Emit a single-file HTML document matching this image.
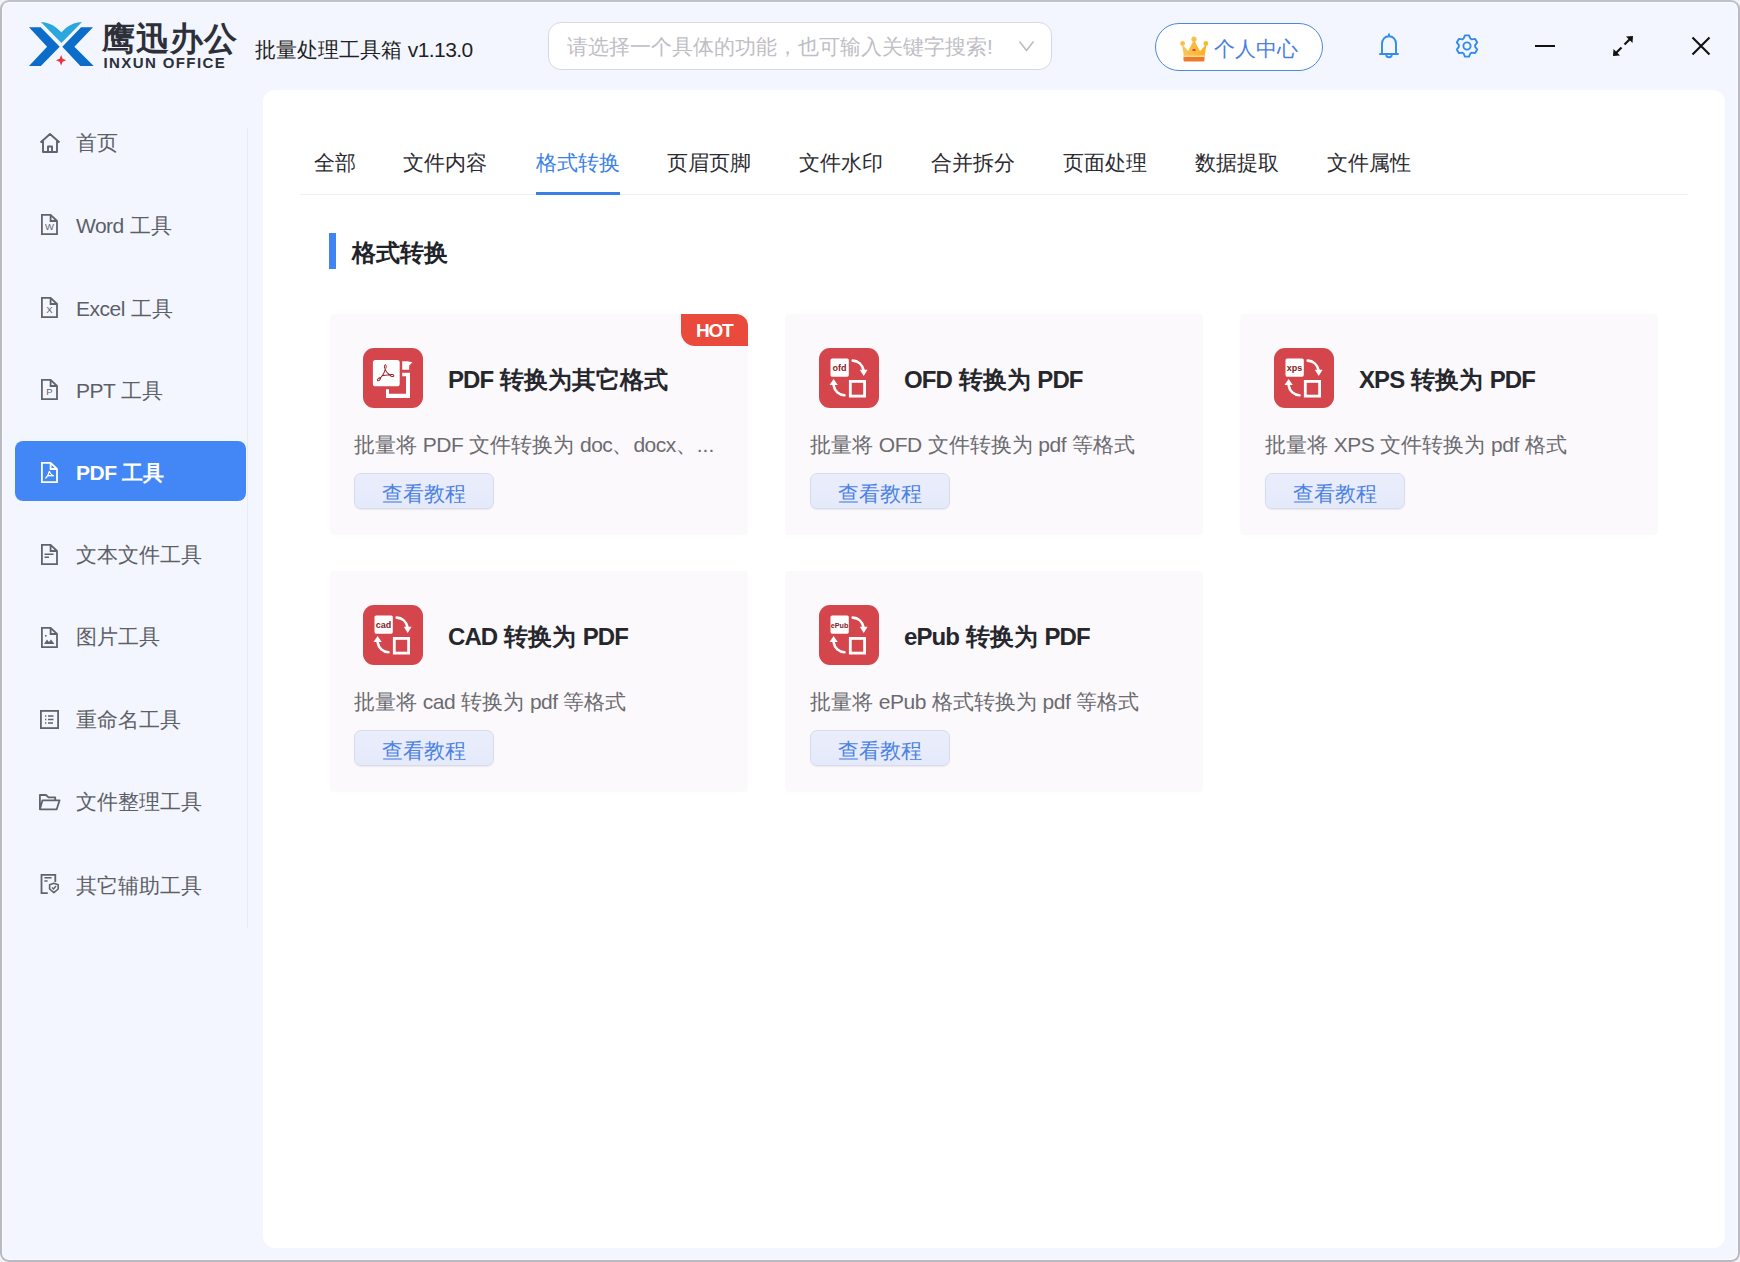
<!DOCTYPE html>
<html><head><meta charset="utf-8"><style>
*{margin:0;padding:0;box-sizing:border-box}
html,body{width:1740px;height:1262px;overflow:hidden;background:#f2f1f4}
body{font-family:"Liberation Sans",sans-serif;position:relative}
.a{position:absolute;white-space:nowrap;line-height:1}
.win{position:absolute;left:0;top:0;width:1740px;height:1262px;background:#f3f6fe;border:2px solid #b9b9c3;border-top-color:#bec1cb;border-radius:9px;box-shadow:inset 0 0 0 1px #fbfbff}
.logo-t{left:102px;top:22px;font-size:33px;font-weight:bold;color:#2d3039;letter-spacing:1px}
.logo-s{left:103.5px;top:54.5px;font-size:15px;font-weight:bold;color:#2d3039;letter-spacing:1.4px}
.title{left:255px;top:39px;font-size:21px;color:#1f1f24}
.search{left:548px;top:22px;width:504px;height:48px;background:#fff;border:1px solid #d9d8e2;border-radius:13px}
.stext{left:567px;top:36px;font-size:21px;color:#bfbec5}
.vip{left:1155px;top:23px;width:168px;height:48px;border:1.4px solid #4d87e0;border-radius:24px;background:#fff}
.viptext{left:1214px;top:37.5px;font-size:21px;color:#4a80df}
.sline{left:247px;top:128px;width:1px;height:800px;background:#e8eaf8}
.act{left:15px;top:441px;width:231px;height:60px;border-radius:8px;background:#4386f5}
.st{left:76px;font-size:21px;color:#5d5f67}
.st.on{color:#fff;font-weight:bold}
.main{left:263px;top:90px;width:1462px;height:1158px;background:#fff;border-radius:12px}
.divider{left:300px;top:194px;width:1388px;height:1px;background:#eeeef3}
.tab{top:151.5px;font-size:21px;color:#2b2b31}
.tab.on{color:#3c7fe7}
.uline{left:536px;top:192px;width:84px;height:3px;background:#3a7ee9}
.secbar{left:329px;top:233px;width:7px;height:36px;background:#3f83f4}
.sect{left:352px;top:241px;font-size:24px;font-weight:bold;color:#222329}
.card{position:absolute;width:418px;height:221px;background:#fbf9fc;border-radius:4px}
.ct{font-size:24px;font-weight:bold;color:#26272d}
.cd{font-size:21px;color:#6b6b70}
.btn{position:absolute;width:140px;height:36px;border-radius:7px;background:linear-gradient(#eaedfb,#e5eafb);border:1px solid #d8dbec;box-shadow:0 1px 1px rgba(90,90,120,0.10)}
.bt{font-size:21px;color:#4b82e3}
.hot{position:absolute;left:681px;top:314px;width:67px;height:32px;background:#ea4a3b;border-radius:0 12px 0 14px}
.hott{left:696px;top:321px;font-size:19px;font-weight:bold;color:#fff;letter-spacing:-1.2px}
</style></head><body>
<div class="win"></div>
<svg class="a" style="left:25px;top:15px" width="75" height="60" viewBox="0 0 75 60">
<path d="M4,12.3 H15.7 L34.7,31.8 L15.9,51.1 H4 L22.1,31.8 Z" fill="#0b6cc9"/>
<path d="M68,12.3 H56.1 L37.3,31.8 L55.4,51.1 H68.7 L49.4,31.8 Z" fill="#0b6cc9"/>
<path d="M15.9,7.1 C22,7.5 27,9.5 31,12.5 L36.4,17.3 L41.8,12.3 C46,9 51,7 57,6.9 L36.4,28 Z" fill="#2ca7de"/>
<path d="M36.1,40 L37.6,43.7 L41.2,45.2 L37.6,46.7 L36.1,50.4 L34.6,46.7 L31,45.2 L34.6,43.7 Z" fill="#ee3340"/>
</svg>
<div class="a logo-t">鹰迅办公</div>
<div class="a logo-s">INXUN OFFICE</div>
<div class="a title">批量处理工具箱 <span style="letter-spacing:-0.6px">v1.13.0</span></div>
<div class="a search"></div>
<div class="a stext">请选择一个具体的功能，也可输入关键字搜索!</div>
<svg class="a" style="left:1018px;top:40px" width="17" height="12" viewBox="0 0 17 12"><path d="M1.5,1.5 L8.5,10.5 L15.5,1.5" fill="none" stroke="#bdbcc3" stroke-width="1.6"/></svg>
<div class="a vip"></div>
<svg class="a" style="left:1180px;top:36px" width="29" height="27" viewBox="0 0 29 27">
<defs><linearGradient id="cg" x1="0" x2="1"><stop offset="0" stop-color="#f7c65a"/><stop offset="1" stop-color="#fbb21f"/></linearGradient></defs>
<circle cx="14" cy="3.2" r="2.6" fill="#f7c04c"/><circle cx="2.6" cy="7.5" r="2.4" fill="#f7c04c"/><circle cx="25.8" cy="7.5" r="2.4" fill="#f9b92f"/>
<path d="M2,8 L8,15 L14,4 L20,15 L26.5,8 L24.5,21 H4 Z" fill="url(#cg)"/>
<rect x="3.5" y="20" width="21" height="5.5" rx="1.5" fill="#ef7a2a"/>
<rect x="3.5" y="19.5" width="21" height="1.5" fill="#f8d79c"/>
<rect x="12.5" y="13" width="3" height="2" fill="#e04a3a"/>
</svg>
<div class="a viptext">个人中心</div>
<svg class="a" style="left:1378px;top:32px" width="22" height="28" viewBox="0 0 22 28">
<path d="M11,2.2 V4.3 M4,22 V12 C4,7.5 7,4.3 11,4.3 C15,4.3 18,7.5 18,12 V22 M2,22 H20 M8.2,22.5 A2.8,2.8 0 0 0 13.8,22.5" fill="none" stroke="#2f8bf0" stroke-width="1.9" stroke-linecap="round"/>
</svg>
<svg class="a" style="left:1453px;top:32px" width="28" height="28" viewBox="0 0 28 28"><path d="M11.94,3.40 L16.06,3.40 L17.34,6.51 L18.82,7.37 L22.15,6.91 L24.21,10.48 L22.16,13.14 L22.16,14.86 L24.21,17.52 L22.15,21.09 L18.82,20.63 L17.34,21.49 L16.06,24.60 L11.94,24.60 L10.66,21.49 L9.18,20.63 L5.85,21.09 L3.79,17.52 L5.84,14.86 L5.84,13.14 L3.79,10.48 L5.85,6.91 L9.18,7.37 L10.66,6.51 Z" fill="none" stroke="#2f8bf0" stroke-width="1.9" stroke-linejoin="round"/><circle cx="14" cy="14" r="3.6" fill="none" stroke="#2f8bf0" stroke-width="1.9"/></svg>
<div class="a" style="left:1535px;top:45px;width:20px;height:2px;background:#111"></div>
<svg class="a" style="left:1610px;top:33px" width="26" height="26" viewBox="0 0 26 26">
<path d="M14.5,11.5 L21,5" stroke="#111" stroke-width="2.2"/><path d="M23,3 L22.5,10 L16,3.5 Z" fill="#111"/>
<path d="M11.5,14.5 L5,21" stroke="#111" stroke-width="2.2"/><path d="M3,23 L3.5,16 L10,22.5 Z" fill="#111"/>
</svg>
<svg class="a" style="left:1690px;top:35px" width="22" height="22" viewBox="0 0 22 22"><path d="M2.5,2.5 L19.5,19.5 M19.5,2.5 L2.5,19.5" stroke="#111" stroke-width="2.1"/></svg>
<div class="a sline"></div>
<div class="a act"></div>
<div class="a st" style="top:132px">首页</div>
<svg class="a" style="left:38px;top:131px" width="24" height="24" viewBox="0 0 24 24"><path d="M2.5,11.5 L12,3 L21.5,11.5 M5,10 V21 H19 V10 M10,21 V15.5 H14 V21" fill="none" stroke="#60636b" stroke-width="1.9" stroke-linejoin="round"/></svg>
<div class="a st" style="top:215px"><span style="letter-spacing:-0.5px">Word</span> 工具</div>
<svg class="a" style="left:40px;top:213px" width="19" height="23" viewBox="0 0 19 23"><path d="M1.9,1.9 H10.6 L17,8 V21.1 H1.9 Z M10.6,1.9 V8 H17" fill="none" stroke="#60636b" stroke-width="1.8" stroke-linejoin="miter"/><text x="9.5" y="17" font-size="9.5" font-family="Liberation Sans" text-anchor="middle" fill="#60636b">W</text></svg>
<div class="a st" style="top:298px"><span style="letter-spacing:-0.5px">Excel</span> 工具</div>
<svg class="a" style="left:40px;top:296px" width="19" height="23" viewBox="0 0 19 23"><path d="M1.9,1.9 H10.6 L17,8 V21.1 H1.9 Z M10.6,1.9 V8 H17" fill="none" stroke="#60636b" stroke-width="1.8" stroke-linejoin="miter"/><text x="9.5" y="17" font-size="9.5" font-family="Liberation Sans" text-anchor="middle" fill="#60636b">X</text></svg>
<div class="a st" style="top:380px"><span style="letter-spacing:-0.5px">PPT</span> 工具</div>
<svg class="a" style="left:40px;top:378px" width="19" height="23" viewBox="0 0 19 23"><path d="M1.9,1.9 H10.6 L17,8 V21.1 H1.9 Z M10.6,1.9 V8 H17" fill="none" stroke="#60636b" stroke-width="1.8" stroke-linejoin="miter"/><text x="9.5" y="17" font-size="9.5" font-family="Liberation Sans" text-anchor="middle" fill="#60636b">P</text></svg>
<div class="a st on" style="top:462px"><span style="letter-spacing:-0.5px">PDF</span> 工具</div>
<svg class="a" style="left:40px;top:461px" width="19" height="23" viewBox="0 0 19 23"><path d="M1.9,1.9 H10.6 L17,8 V21.1 H1.9 Z M10.6,1.9 V8 H17" fill="none" stroke="#fff" stroke-width="1.8" stroke-linejoin="miter"/><path d="M9.5,10 C9,12 8,15 5.5,17.5 M9.5,10 C10,12.5 11.5,14 14,15 M7.5,15 C9,14.5 11,14.5 13,15" fill="none" stroke="#fff" stroke-width="1.2"/></svg>
<div class="a st" style="top:544px">文本文件工具</div>
<svg class="a" style="left:40px;top:543px" width="19" height="23" viewBox="0 0 19 23"><path d="M1.9,1.9 H10.6 L17,8 V21.1 H1.9 Z M10.6,1.9 V8 H17" fill="none" stroke="#60636b" stroke-width="1.8" stroke-linejoin="miter"/><path d="M4.5,11.2 H13.5 M4.5,14.3 H9" stroke="#60636b" stroke-width="1.4"/></svg>
<div class="a st" style="top:626px">图片工具</div>
<svg class="a" style="left:40px;top:626px" width="19" height="23" viewBox="0 0 19 23"><path d="M1.9,1.9 H10.6 L17,8 V21.1 H1.9 Z M10.6,1.9 V8 H17" fill="none" stroke="#60636b" stroke-width="1.8" stroke-linejoin="miter"/><path d="M4,18 L7,13.5 L9,16 L11,13.5 L14.5,18 Z" fill="#60636b"/><rect x="5" y="9" width="1.6" height="1.6" fill="#60636b"/></svg>
<div class="a st" style="top:709px">重命名工具</div>
<svg class="a" style="left:39px;top:709px" width="21" height="21" viewBox="0 0 21 21"><rect x="1.9" y="1.9" width="17.2" height="17.2" fill="none" stroke="#60636b" stroke-width="1.8"/><path d="M6,7 H7.3 M6,10.5 H7.3 M6,14 H7.3 M9,7 H14.5 M9,10.5 H14.5 M9,14 H14" stroke="#60636b" stroke-width="1.3"/></svg>
<div class="a st" style="top:791px">文件整理工具</div>
<svg class="a" style="left:38px;top:793px" width="24" height="18" viewBox="0 0 24 18"><path d="M1.9,16.3 V2 H8 L10.5,4.3 H17.2 V7.3 M1.9,16.3 L4.5,7.3 H21.6 L18.7,16.3 Z" fill="none" stroke="#60636b" stroke-width="1.8" stroke-linejoin="round"/></svg>
<div class="a st" style="top:875px">其它辅助工具</div>
<svg class="a" style="left:40px;top:873px" width="20" height="23" viewBox="0 0 20 23"><path d="M7.8,20.2 H1.5 V1.8 H15.3 V9" fill="none" stroke="#60636b" stroke-width="1.8"/><path d="M4.4,4.8 H11.6 M4.4,8 H7.6" stroke="#60636b" stroke-width="1.5"/><path d="M13.9,10.3 L18.2,11.8 V16 L13.9,19.6 L9.6,16 V11.8 Z" fill="none" stroke="#60636b" stroke-width="1.6" stroke-linejoin="round"/><path d="M12,14.6 L13.5,16 L16,13" fill="none" stroke="#60636b" stroke-width="1.4"/></svg>
<div class="a main"></div>
<div class="a divider"></div>
<div class="a tab" style="left:314px">全部</div>
<div class="a tab" style="left:403px">文件内容</div>
<div class="a tab on" style="left:536px">格式转换</div>
<div class="a tab" style="left:667px">页眉页脚</div>
<div class="a tab" style="left:799px">文件水印</div>
<div class="a tab" style="left:931px">合并拆分</div>
<div class="a tab" style="left:1063px">页面处理</div>
<div class="a tab" style="left:1195px">数据提取</div>
<div class="a tab" style="left:1327px">文件属性</div>
<div class="a uline"></div>
<div class="a secbar"></div>
<div class="a sect">格式转换</div>
<div class="card" style="left:330px;top:314px"></div>
<svg class="a" style="left:363px;top:348px" width="60" height="60" viewBox="0 0 60 60"><rect width="60" height="60" rx="11" fill="#d5454c"/><rect x="9.9" y="12" width="26.8" height="26.3" rx="2.6" fill="#fff"/><ellipse cx="22.3" cy="18.8" rx="0.9" ry="2.2" fill="none" stroke="#962428" stroke-width="1"/><path d="M22.3,21 C21.5,24.5 19.5,28 16.5,30.8 M22.3,21 C23,24 24.8,26 28,27.2 M19.6,27.6 C22.5,27 25,26.9 27.8,27.3" fill="none" stroke="#962428" stroke-width="1.1"/><ellipse cx="15.9" cy="31.3" rx="1.8" ry="1" transform="rotate(-40 15.9 31.3)" fill="none" stroke="#962428" stroke-width="1"/><ellipse cx="29.1" cy="27.5" rx="1.8" ry="1" transform="rotate(15 29.1 27.5)" fill="none" stroke="#962428" stroke-width="1"/><path d="M23,45.8 H47 V50 H23 Z M43,24.7 H47 V50 H43 Z M39.2,24.7 H47 V28.3 H39.2 Z M23,41.3 H26 V50 H23 Z" fill="#fff"/><path d="M39.2,13.2 H44.5 L49.5,14.2 L46.2,17.5 V21.7 H39.2 Z" fill="#fff"/></svg>
<div class="a ct" style="left:448px;top:368px"><span style="letter-spacing:-0.9px">PDF</span> 转换为其它格式</div>
<div class="a cd" style="left:354px;top:434px">批量将 <span style="letter-spacing:-0.5px">PDF</span> 文件转换为 <span style="letter-spacing:-0.5px">doc</span>、<span style="letter-spacing:-0.5px">docx</span>、...</div>
<div class="btn" style="left:354px;top:473px"></div>
<div class="a bt" style="left:382px;top:482.5px">查看教程</div>
<div class="card" style="left:785px;top:314px"></div>
<svg class="a" style="left:819px;top:348px" width="60" height="60" viewBox="0 0 60 60"><rect width="60" height="60" rx="11" fill="#d5454c"/><rect x="11.5" y="10.4" width="18.3" height="18.3" rx="1.6" fill="#fff"/><text x="20.6" y="23" font-size="9" font-weight="bold" font-family="Liberation Sans" text-anchor="middle" fill="#7e2327">ofd</text><rect x="31.3" y="33.4" width="14.3" height="14.7" fill="none" stroke="#fff" stroke-width="2.8"/><path d="M33.7,12.6 C39,12.8 43.5,16.5 44.6,22.5" fill="none" stroke="#fff" stroke-width="2.6" stroke-linecap="round"/><path d="M40.8,21.7 H48.6 L44.7,28 Z" fill="#fff"/><path d="M25.5,47.3 C20,47 15.5,43 14.7,37.5" fill="none" stroke="#fff" stroke-width="2.6" stroke-linecap="round"/><path d="M10.5,37 H18.8 L14.6,31 Z" fill="#fff"/></svg>
<div class="a ct" style="left:904px;top:368px"><span style="letter-spacing:-0.9px">OFD</span> 转换为 <span style="letter-spacing:-0.9px">PDF</span></div>
<div class="a cd" style="left:810px;top:434px">批量将 <span style="letter-spacing:-0.5px">OFD</span> 文件转换为 <span style="letter-spacing:-0.5px">pdf</span> 等格式</div>
<div class="btn" style="left:810px;top:473px"></div>
<div class="a bt" style="left:838px;top:482.5px">查看教程</div>
<div class="card" style="left:1240px;top:314px"></div>
<svg class="a" style="left:1274px;top:348px" width="60" height="60" viewBox="0 0 60 60"><rect width="60" height="60" rx="11" fill="#d5454c"/><rect x="11.5" y="10.4" width="18.3" height="18.3" rx="1.6" fill="#fff"/><text x="20.6" y="23" font-size="9" font-weight="bold" font-family="Liberation Sans" text-anchor="middle" fill="#7e2327">xps</text><rect x="31.3" y="33.4" width="14.3" height="14.7" fill="none" stroke="#fff" stroke-width="2.8"/><path d="M33.7,12.6 C39,12.8 43.5,16.5 44.6,22.5" fill="none" stroke="#fff" stroke-width="2.6" stroke-linecap="round"/><path d="M40.8,21.7 H48.6 L44.7,28 Z" fill="#fff"/><path d="M25.5,47.3 C20,47 15.5,43 14.7,37.5" fill="none" stroke="#fff" stroke-width="2.6" stroke-linecap="round"/><path d="M10.5,37 H18.8 L14.6,31 Z" fill="#fff"/></svg>
<div class="a ct" style="left:1359px;top:368px"><span style="letter-spacing:-0.9px">XPS</span> 转换为 <span style="letter-spacing:-0.9px">PDF</span></div>
<div class="a cd" style="left:1265px;top:434px">批量将 <span style="letter-spacing:-0.5px">XPS</span> 文件转换为 <span style="letter-spacing:-0.5px">pdf</span> 格式</div>
<div class="btn" style="left:1265px;top:473px"></div>
<div class="a bt" style="left:1293px;top:482.5px">查看教程</div>
<div class="card" style="left:330px;top:571px"></div>
<svg class="a" style="left:363px;top:605px" width="60" height="60" viewBox="0 0 60 60"><rect width="60" height="60" rx="11" fill="#d5454c"/><rect x="11.5" y="10.4" width="18.3" height="18.3" rx="1.6" fill="#fff"/><text x="20.6" y="23" font-size="9" font-weight="bold" font-family="Liberation Sans" text-anchor="middle" fill="#7e2327">cad</text><rect x="31.3" y="33.4" width="14.3" height="14.7" fill="none" stroke="#fff" stroke-width="2.8"/><path d="M33.7,12.6 C39,12.8 43.5,16.5 44.6,22.5" fill="none" stroke="#fff" stroke-width="2.6" stroke-linecap="round"/><path d="M40.8,21.7 H48.6 L44.7,28 Z" fill="#fff"/><path d="M25.5,47.3 C20,47 15.5,43 14.7,37.5" fill="none" stroke="#fff" stroke-width="2.6" stroke-linecap="round"/><path d="M10.5,37 H18.8 L14.6,31 Z" fill="#fff"/></svg>
<div class="a ct" style="left:448px;top:625px"><span style="letter-spacing:-0.9px">CAD</span> 转换为 <span style="letter-spacing:-0.9px">PDF</span></div>
<div class="a cd" style="left:354px;top:691px">批量将 <span style="letter-spacing:-0.5px">cad</span> 转换为 <span style="letter-spacing:-0.5px">pdf</span> 等格式</div>
<div class="btn" style="left:354px;top:730px"></div>
<div class="a bt" style="left:382px;top:739.5px">查看教程</div>
<div class="card" style="left:785px;top:571px"></div>
<svg class="a" style="left:819px;top:605px" width="60" height="60" viewBox="0 0 60 60"><rect width="60" height="60" rx="11" fill="#d5454c"/><rect x="11.5" y="10.4" width="18.3" height="18.3" rx="1.6" fill="#fff"/><text x="20.6" y="23" font-size="7.2" font-weight="bold" font-family="Liberation Sans" text-anchor="middle" fill="#7e2327">ePub</text><rect x="31.3" y="33.4" width="14.3" height="14.7" fill="none" stroke="#fff" stroke-width="2.8"/><path d="M33.7,12.6 C39,12.8 43.5,16.5 44.6,22.5" fill="none" stroke="#fff" stroke-width="2.6" stroke-linecap="round"/><path d="M40.8,21.7 H48.6 L44.7,28 Z" fill="#fff"/><path d="M25.5,47.3 C20,47 15.5,43 14.7,37.5" fill="none" stroke="#fff" stroke-width="2.6" stroke-linecap="round"/><path d="M10.5,37 H18.8 L14.6,31 Z" fill="#fff"/></svg>
<div class="a ct" style="left:904px;top:625px"><span style="letter-spacing:-0.9px">ePub</span> 转换为 <span style="letter-spacing:-0.9px">PDF</span></div>
<div class="a cd" style="left:810px;top:691px">批量将 <span style="letter-spacing:-0.5px">ePub</span> 格式转换为 <span style="letter-spacing:-0.5px">pdf</span> 等格式</div>
<div class="btn" style="left:810px;top:730px"></div>
<div class="a bt" style="left:838px;top:739.5px">查看教程</div>
<div class="hot"></div>
<div class="a hott">HOT</div>
</body></html>
